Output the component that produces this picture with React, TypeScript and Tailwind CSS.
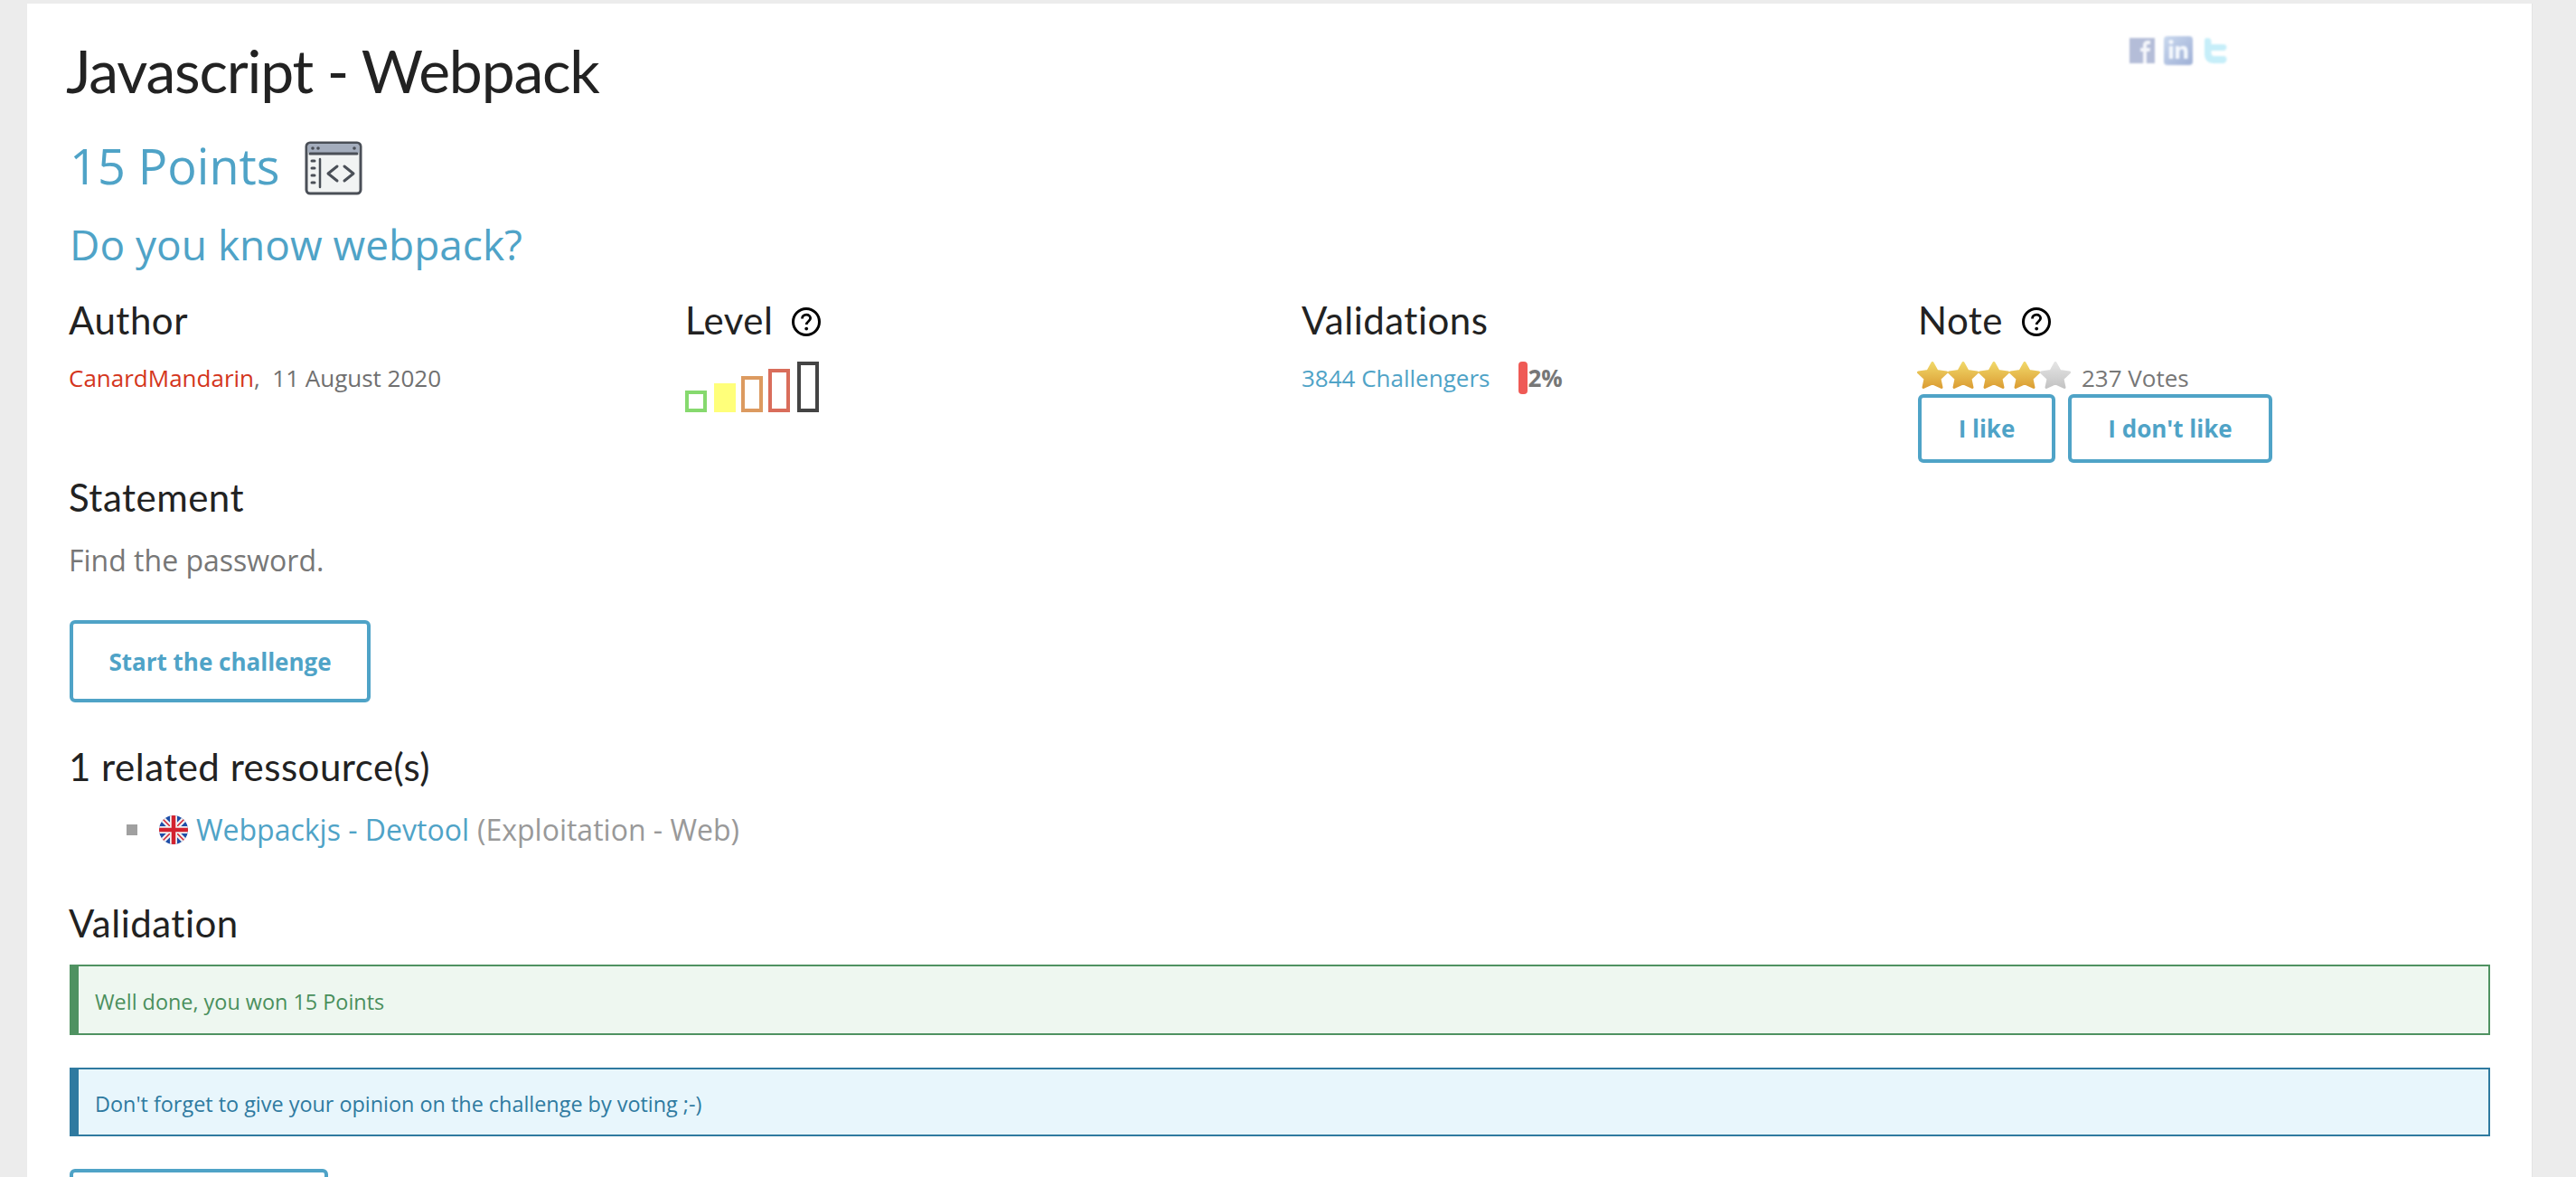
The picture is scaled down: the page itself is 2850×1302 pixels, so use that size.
import { FaLinkedinIn } from "react-icons/fa";

const body = "font-['Open_Sans','Noto_Sans',sans-serif]";
const head = "font-['Lato','Noto_Sans',sans-serif]";

function HelpIcon() {
  return (
    <svg viewBox="0 0 32 32" className="w-8 h-8 ml-[21px] mt-1 shrink-0">
      <circle cx="16" cy="16" r="14.5" fill="none" stroke="#000" strokeWidth="3" />
      <path d="M11.5 12.5c0-2.600 2-4.300 4.600-4.300s4.500 1.600 4.500 3.900c0 3.400-4.400 3.400-4.400 7" fill="none" stroke="#000" strokeWidth="2.800" />
      <circle cx="16.200" cy="23.600" r="1.900" fill="#000" />
    </svg>
  );
}

function Star({ on }: { on: boolean }) {
  const id = on ? "starGold" : "starGrey";
  return (
    <svg viewBox="0 0 34 30" className="w-[34px] h-[30px] shrink-0">
      <defs>
        <linearGradient id={id} x1="0" y1="0" x2="0" y2="1">
          <stop offset="0" stopColor={on ? "#f0d667" : "#e4e4e4"} />
          <stop offset="1" stopColor={on ? "#dc9f35" : "#c4c4c4"} />
        </linearGradient>
      </defs>
      <path
        d="M17 1.500l5 9 10.500 1.500-7.500 7 2 9.500-10-4.500-10 4.500 2-9.500-7.500-7 10.500-1.500z"
        fill={`url(#${id})`}
        stroke={`url(#${id})`}
        strokeWidth="3"
        strokeLinejoin="round"
      />
    </svg>
  );
}

function OutlineButton({ label, className }: { label: string; className: string }) {
  return (
    <button className={`border-4 border-[#4fa3c7] rounded-md bg-white text-[#4fa3c7] font-bold ${className}`}>
      {label}
    </button>
  );
}

function Flag() {
  return (
    <svg viewBox="0 0 32 32" className="w-8 h-8 shrink-0">
      <defs>
        <clipPath id="flagClip">
          <circle cx="16" cy="16" r="16" />
        </clipPath>
      </defs>
      <g clipPath="url(#flagClip)">
        <rect width="32" height="32" fill="#1f4ea8" />
        <path d="M0 0L32 32M32 0L0 32" stroke="#f2f2f2" strokeWidth="6" />
        <path d="M0 0L32 32M32 0L0 32" stroke="#d2232f" strokeWidth="1.500" />
        <path d="M16 0V32M0 16H32" stroke="#f2f2f2" strokeWidth="8" />
        <path d="M16 0V32M0 16H32" stroke="#d2232f" strokeWidth="4.500" />
      </g>
    </svg>
  );
}

function ChallengeIcon() {
  return (
    <svg viewBox="0 0 64 60" className="w-16 h-[60px] ml-[28px] mt-[6px] shrink-0">
      <rect x="2" y="2" width="60" height="56" rx="4" fill="#f1f3f3" stroke="#4a4f57" strokeWidth="3" />
      <path d="M3.500 6a3 3 0 0 1 3-3h51a3 3 0 0 1 3 3v7h-57z" fill="#a4adbd" />
      <path d="M6 14H58" stroke="#4a4f57" strokeWidth="3" strokeLinecap="round" />
      <circle cx="9" cy="8" r="1.800" fill="#4a4f57" />
      <circle cx="15" cy="8" r="1.800" fill="#4a4f57" />
      <circle cx="55" cy="8" r="1.800" fill="#4a4f57" />
      <path d="M8 22h3M8 30h3M8 38h3M8 46h3" stroke="#4a4f57" strokeWidth="3" strokeLinecap="round" />
      <path d="M17 20V51" stroke="#4a4f57" strokeWidth="2.500" strokeLinecap="round" />
      <path d="M36 28l-10 8 10 8M44 28l10 8-10 8" fill="none" stroke="#4a4f57" strokeWidth="3" strokeLinecap="round" strokeLinejoin="round" />
    </svg>
  );
}

function SocialIcons() {
  return (
    <div className="absolute left-[2326px] top-9 flex items-center gap-[10px] blur-[0.8px]">
      <svg viewBox="0 0 28 28" className="w-7 h-7">
        <rect width="28" height="28" fill="#b4bdd8" />
        <path d="M15 28V15h-3v-4h3V8c0-3 2-5 5-5h3v4h-2c-1.400 0-2 .600-2 2v2h4l-.600 4H19v13z" fill="#f4f6fb" />
      </svg>
      <div className="w-8 h-8 rounded bg-gradient-to-br from-[#c9d8ee] to-[#9fb0d6] flex items-center justify-center">
        <FaLinkedinIn className="w-6 h-6 text-[#f4f8fd]" />
      </div>
      <svg viewBox="0 0 32 32" className="w-8 h-8">
        <path d="M6 2c3 0 4.500 1.500 4.500 4v3H24c2.500 0 3.500 2 3.500 3.500S26 16 24 16H10.500v3c0 2 1 3 3.500 3H24c2.500 0 3.500 1.500 3.500 3.500S26 30 24 30H13C7 30 3 26 3 20V5c0-2 1-3 3-3z" fill="#c6eef9" />
      </svg>
    </div>
  );
}

const h2 = `${head} text-[42px] leading-[48px] text-[#222] tracking-[0.5px] -ml-px`;

export default function App() {
  return (
    <div className={`${body} h-[1302px] overflow-hidden bg-[#ececec] pt-1`}>
      <div className="relative mx-[30px] w-[2772px] h-[1298px] overflow-hidden bg-white pl-[47px] pr-[46px] border-r border-[#e3e3e3]">
        <SocialIcons />
        <h1 className={`${head} text-[66px] leading-[76px] text-[#222] tracking-[-1.200px] pt-[36px] -ml-1`}>Javascript - Webpack</h1>
        <div className="flex items-center mt-[37px] h-[60px]">
          <span className="text-[54px] leading-[60px] text-[#4fa3c7]">15 Points</span>
          <ChallengeIcon />
        </div>
        <h2 className="text-[46px] leading-[56px] text-[#4fa3c7] mt-[29px]">Do you know webpack?</h2>

        <div className="grid grid-cols-[682px_682px_682px_1fr] mt-[32px]">
          <div>
            <div className="flex items-center"><h3 className={h2}>Author</h3></div>
            <p className="text-[26px] leading-[34px] mt-[23px] text-[#707070] -ml-px">
              <span className="text-[#d4351c]">CanardMandarin</span>,&nbsp; 11 August 2020
            </p>
          </div>
          <div>
            <div className="flex items-center"><h3 className={h2}>Level</h3><HelpIcon /></div>
            <div className="flex items-end mt-[22px] h-[56px] -ml-px">
              <div className="w-6 h-6 border-4 border-[#86d96e]" />
              <div className="w-6 h-8 ml-2 bg-[#ffff7a]" />
              <div className="w-6 h-10 ml-[6px] border-4 border-[#dc9a60]" />
              <div className="w-6 h-12 ml-[6px] border-4 border-[#d96d5b]" />
              <div className="w-6 h-14 ml-2 border-4 border-[#444]" />
            </div>
          </div>
          <div>
            <div className="flex items-center"><h3 className={h2}>Validations</h3></div>
            <div className="flex items-center mt-[22px] h-[36px] -ml-px">
              <span className="text-[26px] text-[#4fa3c7]">3844 Challengers</span>
              <div className="w-[10px] h-9 rounded ml-[32px] bg-[#ef5a55]" />
              <span className="text-[26px] font-bold text-[#777]">2%</span>
            </div>
          </div>
          <div>
            <div className="flex items-center"><h3 className={h2}>Note</h3><HelpIcon /></div>
            <div className="flex items-center mt-[22px] h-[30px] -ml-[2px]">
              <Star on /><Star on /><Star on /><Star on /><Star on={false} />
              <span className="text-[26px] text-[#777] ml-3 mt-[6px]">237 Votes</span>
            </div>
            <div className="flex gap-[14px] mt-[6px] -ml-px">
              <OutlineButton label="I like" className="w-[152px] h-[76px] text-[26px]" />
              <OutlineButton label="I don't like" className="w-[226px] h-[76px] text-[26px]" />
            </div>
          </div>
        </div>

        <h3 className={`${h2} mt-[14px]`}>Statement</h3>
        <p className="text-[32px] leading-[40px] text-[#777] mt-[26px] -ml-px">Find the password.</p>
        <OutlineButton label="Start the challenge" className="block w-[333px] h-[91px] pt-[2px] text-[26px] mt-[46px]" />

        <h3 className={`${h2} mt-[47px]`}>1 related ressource(s)</h3>
        <ul className="mt-[26px]">
          <li className="flex items-center h-[40px] text-[32px] leading-[40px] pl-[63px]">
            <span className="w-3 h-3 bg-[#a0a0a0] shrink-0" />
            <span className="ml-6"><Flag /></span>
            <a className="text-[#4fa3c7] ml-[9px]">Webpackjs - Devtool</a>
            <span className="text-[#999] ml-[9px]">(Exploitation - Web)</span>
          </li>
        </ul>

        <h3 className={`${h2} mt-[59px]`}>Validation</h3>
        <div className="flex items-center h-[78px] mt-[22px] border-2 border-l-[10px] border-[#4f9261] bg-[#eef7f0] pt-[5px] pl-[18px] text-[23.400px] text-[#4a8f5c]">
          Well done, you won 15 Points
        </div>
        <div className="flex items-center h-[76px] mt-[36px] border-2 border-l-[10px] border-[#2f7aa0] bg-[#e8f6fc] pt-[5px] pl-[18px] text-[23.400px] text-[#2f7aa0]">
          Don't forget to give your opinion on the challenge by voting ;-)
        </div>
        <div className="w-[286px] h-[90px] mt-[36px] border-4 border-[#4fa3c7] rounded-md" />
      </div>
    </div>
  );
}
